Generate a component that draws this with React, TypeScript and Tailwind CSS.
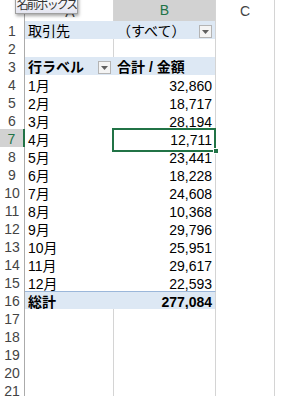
import React from "react";

type Row = {
    a?: string;
    b?: string;
    kind: "plain" | "pivotHead" | "pivotBody" | "pivotTotal";
    aDrop?: boolean;
    bDrop?: boolean;
};

const rows: Row[] = [
    { a: "取引先", b: "（すべて）", kind: "pivotHead", bDrop: true },
    { kind: "plain" },
    { a: "行ラベル", b: "合計 / 金額", kind: "pivotHead", aDrop: true },
    { a: "1月", b: "32,860", kind: "pivotBody" },
    { a: "2月", b: "18,717", kind: "pivotBody" },
    { a: "3月", b: "28,194", kind: "pivotBody" },
    { a: "4月", b: "12,711", kind: "pivotBody" },
    { a: "5月", b: "23,441", kind: "pivotBody" },
    { a: "6月", b: "18,228", kind: "pivotBody" },
    { a: "7月", b: "24,608", kind: "pivotBody" },
    { a: "8月", b: "10,368", kind: "pivotBody" },
    { a: "9月", b: "29,796", kind: "pivotBody" },
    { a: "10月", b: "25,951", kind: "pivotBody" },
    { a: "11月", b: "29,617", kind: "pivotBody" },
    { a: "12月", b: "22,593", kind: "pivotBody" },
    { a: "総計", b: "277,084", kind: "pivotTotal" },
    { kind: "plain" },
    { kind: "plain" },
    { kind: "plain" },
    { kind: "plain" },
    { kind: "plain" },
];

const Dropdown: React.FC = () => (
    <span className="ml-auto mr-[3px] flex h-[13px] w-[13px] items-center justify-center border border-[#b4b4b4] bg-[#f4f4f4]">
        <svg width="7" height="4" viewBox="0 0 7 4">
            <path d="M0 0h7L3.5 4z" fill="#5f5f5f" />
        </svg>
    </span>
);

const App: React.FC = () => {
    const selectedRow = 7;

    return (
        <div
            className="relative h-[396px] w-[290px] overflow-hidden bg-white text-[14px] text-black"
            style={{ fontFamily: '"Liberation Sans", "Noto Sans CJK JP", sans-serif' }}
        >
            {/* column headers */}
            <div className="grid h-[21px] grid-cols-[25px_89px_102px_59px_1fr] border-b border-[#ababab] text-[14px] text-[#444]">
                <div className="border-r border-[#ababab] bg-white"></div>
                <div className="flex items-end justify-center border-r border-[#d4d4d4] bg-white pl-[2px]">A</div>
                <div className="flex items-center justify-center border-r border-[#d4d4d4] border-b-2 border-b-[#217346] bg-[#d2d2d2] text-[#217346]">
                    B
                </div>
                <div className="flex items-center justify-center border-r border-[#d4d4d4] bg-white">C</div>
                <div className="bg-white"></div>
            </div>

            {rows.map((r, i) => {
                const n = i + 1;
                const isSel = n === selectedRow;
                const blue = r.kind === "pivotHead" || r.kind === "pivotTotal";
                const bold = r.kind === "pivotTotal" || n === 3;
                const pivot = r.kind !== "plain";
                return (
                    <div key={n} className="grid h-[18px] grid-cols-[25px_89px_102px_59px_1fr]">
                        <div
                            className={
                                isSel
                                    ? "flex items-center justify-center border-r-2 border-b border-r-[#217346] border-b-[#d4d4d4] bg-[#d2d2d2] text-[14px] text-[#217346]"
                                    : "flex items-center justify-center border-r border-b border-r-[#ababab] border-b-[#d4d4d4] bg-white text-[14px] text-[#444]"
                            }
                        >
                            {n}
                        </div>

                        {/* column A */}
                        <div
                            className={
                                "flex items-center whitespace-nowrap pl-[3px] " +
                                (pivot ? "" : "border-r border-b border-[#d4d4d4] ") +
                                (blue ? "bg-[#dde8f4] " : "bg-white ") +
                                (r.kind === "pivotHead" ? "border-b border-b-[#9bb7da] " : "") +
                                (r.kind === "pivotTotal" ? "border-t border-t-[#9bb7da] " : "") +
                                (bold ? "font-bold" : "")
                            }
                        >
                            <span>{r.a}</span>
                            {r.aDrop && <Dropdown />}
                        </div>

                        {/* column B */}
                        <div
                            className={
                                "relative flex items-center whitespace-nowrap " +
                                (pivot ? "border-r border-r-[#d4d4d4] " : "border-r border-b border-[#d4d4d4] ") +
                                (blue ? "bg-[#dde8f4] " : "bg-white ") +
                                (r.kind === "pivotHead" ? "border-b border-b-[#9bb7da] " : "") +
                                (r.kind === "pivotTotal" ? "border-t border-t-[#9bb7da] " : "") +
                                (bold ? "font-bold " : "") +
                                (r.kind === "pivotBody" || r.kind === "pivotTotal" ? "justify-end pr-[3px]" : "pl-[3px]")
                            }
                        >
                            <span>{r.b}</span>
                            {r.bDrop && <Dropdown />}
                            {isSel && (
                                <>
                                    <span className="pointer-events-none absolute -left-[2px] -top-[1px] bottom-[-1px] right-[-1px] z-10 border-2 border-[#217346]"></span>
                                    <span className="absolute -bottom-[3px] -right-[4px] z-10 h-[6px] w-[6px] border border-white bg-[#217346]"></span>
                                </>
                            )}
                        </div>

                        <div className="border-r border-b border-[#d4d4d4] bg-white"></div>
                        <div className="border-b border-[#d4d4d4] bg-white"></div>
                    </div>
                );
            })}

            {/* name box tooltip */}
            <div className="absolute left-[15px] top-[-5px] z-20 flex h-[19px] w-[63px] items-center justify-center overflow-hidden border border-[#a0a0a0] bg-gradient-to-b from-white to-[#e4e5f0] text-[12px] tracking-[-2px] text-[#333] shadow-[1px_2px_3px_rgba(0,0,0,0.35)]">
                名前ボックス
            </div>
        </div>
    );
};

export default App;
